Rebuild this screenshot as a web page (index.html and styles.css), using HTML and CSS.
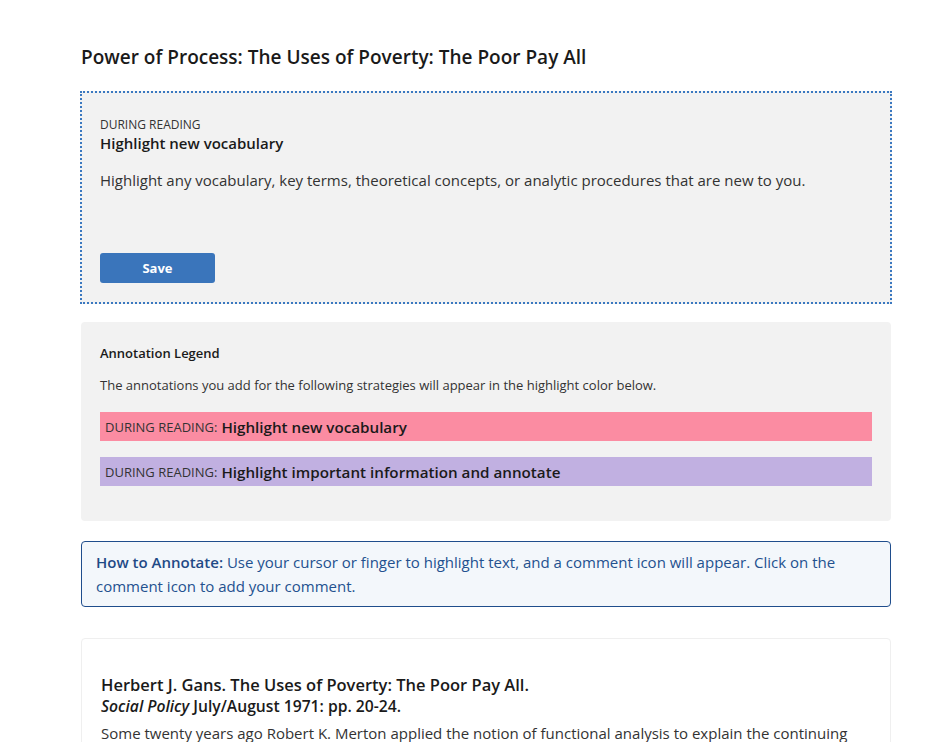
FILE: index.html
```html
<!DOCTYPE html>
<html>
<head>
<meta charset="utf-8">
<link rel="stylesheet" href="styles.css">
</head>
<body>
<main class="page">
  <h1 class="title">Power of Process: The Uses of Poverty: The Poor Pay All</h1>

  <section class="task">
    <div class="task-label">DURING READING</div>
    <div class="task-name">Highlight new vocabulary</div>
    <p class="task-desc">Highlight any vocabulary, key terms, theoretical concepts, or analytic procedures that are new to you.</p>
    <button class="save">Save</button>
  </section>

  <section class="legend">
    <div class="legend-title">Annotation Legend</div>
    <p class="legend-desc">The annotations you add for the following strategies will appear in the highlight color below.</p>
    <div class="legend-item pink"><span class="cap">DURING READING:</span> <strong>Highlight new vocabulary</strong></div>
    <div class="legend-item purple"><span class="cap">DURING READING:</span> <strong>Highlight important information and annotate</strong></div>
  </section>

  <section class="howto">
    <strong>How to Annotate:</strong> Use your cursor or finger to highlight text, and a comment icon will appear. Click on the comment icon to add your comment.
  </section>

  <article class="reading">
    <h2 class="ref">Herbert J. Gans. The Uses of Poverty: The Poor Pay All.</h2>
    <div class="source"><em>Social Policy</em> July/August 1971: pp. 20-24.</div>
    <p class="body">Some twenty years ago Robert K. Merton applied the notion of functional analysis to explain the continuing persistence of the urban political machine.</p>
  </article>
</main>
</body>
</html>
```

FILE: styles.css
```css
* { box-sizing: border-box; }
html, body { margin: 0; padding: 0; background: #fff; }
body {
  font-family: "Open Sans", Lato, Arial, sans-serif;
  color: #222;
}
.page {
  width: 810px;
  margin-left: 81px;
  padding-top: 44px;
  display: flex;
  flex-direction: column;
}
.title {
  font-size: 19px;
  font-weight: 600;
  margin: 0 0 21px;
  line-height: 26px;
  color: #1a1a1a;
}
.task {
  margin-left: -1px;
  margin-right: -1px;
  border: 2px dotted #3a78c0;
  background: #f2f2f2;
  padding: 24px 18px 19px;
  display: flex;
  flex-direction: column;
  align-items: flex-start;
}
.task-label {
  font-size: 12px;
  line-height: 16px;
  color: #333;
}
.task-name {
  font-size: 15px;
  font-weight: 600;
  line-height: 20px;
  color: #1a1a1a;
}
.task-desc {
  font-size: 15px;
  line-height: 20px;
  margin: 17px 0 63px;
  color: #333;
}
.save {
  width: 115px;
  height: 30px;
  border: 0;
  border-radius: 3px;
  background: #3a75bb;
  color: #fff;
  font-family: inherit;
  font-weight: 700;
  font-size: 13px;
}
.legend {
  margin-top: 18px;
  background: #f2f2f2;
  border-radius: 4px;
  padding: 22px 19px 35px;
  display: flex;
  flex-direction: column;
}
.legend-title {
  font-size: 13px;
  font-weight: 600;
  line-height: 18px;
  color: #1a1a1a;
}
.legend-desc {
  font-size: 13px;
  line-height: 18px;
  margin: 14px 0 18px;
  color: #333;
}
.legend-item {
  height: 29px;
  display: flex;
  align-items: center;
  gap: 4px;
  padding-left: 5px;
  font-size: 15.2px;
  color: #1a1a1a;
}
.legend-item strong { font-weight: 600; }
.legend-item .cap { font-size: 13px; color: #333; }
.legend-item + .legend-item { margin-top: 16px; }
.pink { background: #fb8ca2; }
.purple { background: #c1b0e1; }
.howto {
  margin-top: 20px;
  border: 1px solid #1f4d8c;
  border-radius: 4px;
  background: #f3f7fb;
  color: #23518f;
  font-size: 15px;
  line-height: 24px;
  padding: 8px 14px 8px;
}
.howto strong { color: #1f4a86; font-weight: 600; }
.reading {
  margin-top: 31px;
  border: 1px solid #efefef;
  border-radius: 4px;
  padding: 35px 19px 0;
  height: 140px;
  overflow: hidden;
}
.ref {
  margin: 0;
  font-size: 16.5px;
  font-weight: 600;
  line-height: 22px;
  color: #1a1a1a;
}
.source {
  font-size: 15.7px;
  font-weight: 600;
  line-height: 20px;
  color: #1a1a1a;
}
.body {
  margin: 6px 0 0;
  font-size: 15px;
  line-height: 22px;
  color: #333;
}
```
